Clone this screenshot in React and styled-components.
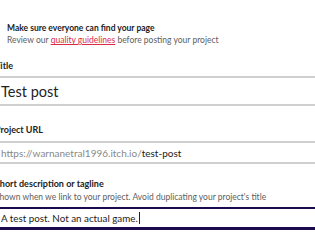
import React from 'react'
import styled, { createGlobalStyle } from 'styled-components'

const Global = createGlobalStyle`
  body {
    margin: 0;
    background: #fff;
    font-family: Lato, "Liberation Sans", sans-serif;
    overflow: hidden;
  }
`

const Page = styled.div`
  width: 340px;
  margin-left: -5px;
`

const Notice = styled.div`
  padding: 22px 0 0 12px;
`

const NoticeTitle = styled.div`
  font-size: 8.5px;
  font-weight: 700;
  color: #222;
  line-height: 12px;
`

const NoticeText = styled.div`
  font-size: 8.5px;
  color: #606060;
  line-height: 12px;
  a {
    color: #da2c49;
    text-decoration: underline;
  }
`

const Field = styled.div`
  margin-top: ${p => p.top}px;
`

const Label = styled.div`
  font-size: 9px;
  font-weight: 700;
  color: #222;
  line-height: 12px;
`

const Sub = styled.div`
  font-size: 8.5px;
  color: #606060;
  line-height: 12px;
  margin-top: 1px;
`

const Input = styled.div`
  margin-top: ${p => p.gap}px;
  height: ${p => p.h}px;
  display: flex;
  align-items: center;
  padding-left: 4px;
  border: 1px solid ${p => (p.focus ? '#1b0b4e' : '#d0d0d0')};
  border-width: 2px 0 2px 2px;
  border-bottom-width: ${p => (p.focus ? 3 : 2)}px;
  box-shadow: ${p => (p.focus ? '0 1px 0 #9d8fc9' : 'none')};
  font-size: ${p => p.size}px;
  color: #222;
  white-space: nowrap;
`

const Prefix = styled.span`
  color: #888;
`

const Caret = styled.span`
  display: inline-block;
  width: 1px;
  height: 12px;
  background: #222;
  margin-left: 1px;
`

export default function App() {
  return (
    <Page>
      <Global />
      <Notice>
        <NoticeTitle>Make sure everyone can find your page</NoticeTitle>
        <NoticeText>
          Review our <a href="#">quality guidelines</a> before posting your project
        </NoticeText>
      </Notice>
      <Field top={14}>
        <Label>Title</Label>
        <Input gap={4} h={26} size={14.5}>Test post</Input>
      </Field>
      <Field top={18}>
        <Label>Project URL</Label>
        <Input gap={5} h={19} size={10}>
          <Prefix>https://warnanetral1996.itch.io/</Prefix>test-post
        </Input>
      </Field>
      <Field top={14}>
        <Label>Short description or tagline</Label>
        <Sub>Shown when we link to your project. Avoid duplicating your project's title</Sub>
        <Input gap={4} h={18} size={9.8} focus>
          A test post. Not an actual game.<Caret />
        </Input>
      </Field>
    </Page>
  )
}
